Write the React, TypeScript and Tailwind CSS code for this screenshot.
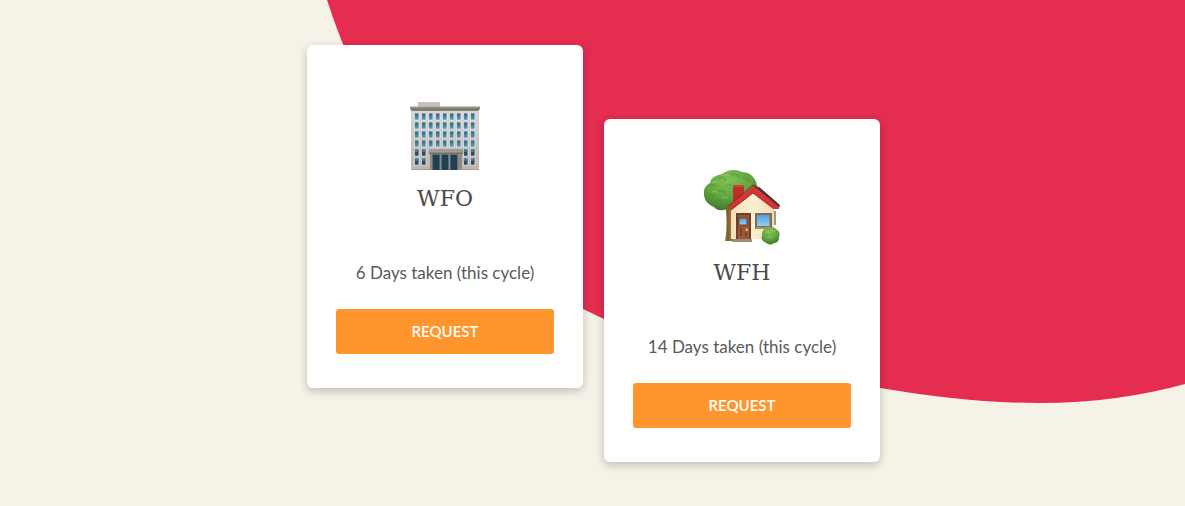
import type { ReactNode } from 'react';

const WINDOW_COLUMNS = [0, 1, 2, 3, 4, 5, 6, 7, 8];
const WINDOW_ROWS = [0, 1, 2, 3, 4, 5];

function OfficeIcon() {
  return (
    <svg viewBox="0 0 80 80" className="h-20 w-20" aria-hidden="true">
      <defs>
        <linearGradient id="office-wall" x1="0" y1="0" x2="0" y2="1">
          <stop offset="0" stopColor="#dad8d4" />
          <stop offset="1" stopColor="#bdb5b0" />
        </linearGradient>
        <linearGradient id="office-glass" x1="0" y1="0" x2="0" y2="1">
          <stop offset="0" stopColor="#356078" />
          <stop offset="1" stopColor="#5f9dba" />
        </linearGradient>
        <linearGradient id="office-cornice" x1="0" y1="0" x2="0" y2="1">
          <stop offset="0" stopColor="#a39d96" />
          <stop offset="1" stopColor="#68615d" />
        </linearGradient>
      </defs>
      <rect x="13" y="9" width="22" height="5" fill="#c5c4bc" />
      <rect x="6" y="16" width="68" height="61" fill="url(#office-wall)" />
      <path d="M5 13.5h70v2l-1.5 2.3h-67L5 15.5z" fill="url(#office-cornice)" />
      {WINDOW_ROWS.map((row) =>
        WINDOW_COLUMNS.filter((col) => row < 4 || col < 2 || col > 6).map((col) => (
          <g key={`${row}-${col}`}>
            <rect x={9 + col * 7} y={20 + row * 9} width="5.4" height="7.4" fill="#e9edef" />
            <rect
              x={9.8 + col * 7}
              y={20.4 + row * 9}
              width="3.8"
              height="6.4"
              fill={row > 3 ? '#304c5b' : 'url(#office-glass)'}
            />
            {row > 3 && <rect x={9.8 + col * 7} y={20.4 + row * 9} width="3.8" height="2.4" fill="#4b7e98" />}
          </g>
        )),
      )}
      <rect x="25" y="59" width="32" height="18" fill="#8f8983" />
      <rect x="24" y="56" width="34" height="4.6" fill="#a29b94" />
      <rect x="24" y="59.6" width="34" height="1.2" fill="#70685f" />
      <rect x="27" y="61" width="26" height="16" fill="#7d8e94" />
      <rect x="27.6" y="61.6" width="7" height="15.4" fill="#213f50" />
      <rect x="36.6" y="61.6" width="6.8" height="15.4" fill="#213f50" />
      <rect x="45.4" y="61.6" width="7" height="15.4" fill="#213f50" />
      <path d="M6 76.5h21M53 76.5h21" stroke="#a69b95" strokeWidth="1" />
    </svg>
  );
}

function HouseIcon() {
  return (
    <svg viewBox="0 0 80 80" className="h-20 w-20" aria-hidden="true">
      <defs>
        <radialGradient id="tree-leaves" cx="0.45" cy="0.25" r="0.75">
          <stop offset="0" stopColor="#80c258" />
          <stop offset="0.6" stopColor="#5fa43d" />
          <stop offset="1" stopColor="#3f7a2b" />
        </radialGradient>
        <linearGradient id="house-wall" x1="0" y1="0" x2="1" y2="0">
          <stop offset="0" stopColor="#f3dfb6" />
          <stop offset="0.5" stopColor="#fdf0d0" />
          <stop offset="1" stopColor="#eeddb5" />
        </linearGradient>
        <linearGradient id="house-pane" x1="0" y1="0" x2="0" y2="1">
          <stop offset="0" stopColor="#529fde" />
          <stop offset="1" stopColor="#96cef5" />
        </linearGradient>
      </defs>
      <path d="M23 36h8v38h-8c2-10 2-25 0-38z" fill="#91713c" />
      <path d="M26 40v34" stroke="#6b522b" strokeWidth="1" />
      <path
        d="M12 40C6 38 1 32 2 25c0-5 3-7 6-9 1-6 7-8 12-9 6-5 15-5 20-2 7 0 11 4 13 8 3 4 2 9 0 13 0 6-6 10-11 10-5 6-11 7-17 6-5 2-10 2-13-2z"
        fill="url(#tree-leaves)"
      />
      <path
        d="M7 19c3-3 6-1 7 1M16 12c4-3 7-1 8 2M28 8c4-2 8 0 9 3M5 28c3-2 6 0 7 3M16 25c3-3 7-1 8 2M14 34c3-2 6 0 7 2M24 19c2-2 4-2 6 0M40 11c4-1 7 1 8 4"
        fill="none"
        stroke="#468330"
        strokeWidth="1.4"
        opacity="0.4"
      />
      <path d="M9 16c3-2 5-2 7 0M21 9c3-2 5-2 7 0M10 25c2-1 4-1 6 1M20 31c2-1 4-1 6 0" fill="none" stroke="#98d36e" strokeWidth="1.2" opacity="0.6" />
      <path d="M31 18h11v11l-11 9z" fill="#bc302a" />
      <path d="M31 18h11v2H31z" fill="#d5443a" />
      <path d="M73 44v14" stroke="#8c7b68" strokeWidth="1.6" />
      <path d="M29 40l22-18 21 20v30H29z" fill="url(#house-wall)" />
      <path d="M51 19L58 21 78 38l-1 3z" fill="#55332f" />
      <path d="M51 19L25 41l4 2 22-17 21 16h5v-2z" fill="#d93434" />
      <path d="M29 43l22-17 21 16" fill="none" stroke="#a52529" strokeWidth="1" />
      <path d="M25 40l26-22 7 3 19 17" fill="none" stroke="#713131" strokeWidth="1" />
      <rect x="34" y="46" width="15" height="26" fill="#70402b" />
      <rect x="36" y="48" width="11" height="24" fill="#9a5637" />
      <rect x="37" y="51" width="8" height="7" fill="url(#house-pane)" stroke="#633522" strokeWidth="0.8" />
      <path d="M38 61h2v8h-2zM43 65h2v4h-2z" fill="#7f422c" />
      <circle cx="44.8" cy="62.7" r="1.2" fill="#f5d16b" />
      <path d="M31 72h19v3H30z" fill="#9b8c7b" />
      <rect x="53" y="46" width="17" height="16" fill="#806c52" />
      <rect x="55" y="48" width="12.5" height="11" fill="url(#house-pane)" />
      <path d="M54 61h15" stroke="#c2a780" strokeWidth="1.2" />
      <path
        d="M61 64c1-3 4-4 6-3 4-2 7 0 8 2 3 1 3 5 2 7 0 4-2 6-5 6-3 3-7 1-9-1-3-1-4-4-3-6 0-2 0-4 1-5z"
        fill="url(#tree-leaves)"
      />
      <path d="M63 66c2-2 4-1 5 0M70 64c2-1 4 0 4 2M65 71c2-2 4-1 5 1" fill="none" stroke="#a1d776" strokeWidth="0.9" opacity="0.7" />
    </svg>
  );
}

interface LeaveCardProps {
  title: string;
  days: number;
  icon: ReactNode;
}

function LeaveCard({ title, days, icon }: LeaveCardProps) {
  return (
    <section className="flex w-full max-w-[276px] flex-col items-center rounded-md bg-white px-[29px] pt-12 pb-[34px] shadow-[0_3px_10px_rgba(0,0,0,0.22)]">
      {icon}
      <h2 className="font-['DejaVu_Serif',serif] text-[22px] leading-[52px] text-[#4a4a4a]">{title}</h2>
      <p className="mt-9 text-[17px] leading-6 whitespace-nowrap text-[#5a5a5a]">{days} Days taken (this cycle)</p>
      <button type="button" className="mt-6 h-[45px] w-full rounded-[3px] bg-[#ff962d] text-[15px] font-semibold text-white">
        REQUEST
      </button>
    </section>
  );
}

export default function App() {
  return (
    <div className="relative min-h-screen overflow-hidden bg-[#f5f2e7] font-[Lato,sans-serif]">
      {/* Background blob */}
      <svg
        viewBox="0 0 1185 506"
        preserveAspectRatio="xMidYMin slice"
        className="absolute inset-0 h-full w-full"
        aria-hidden="true"
      >
        <path
          d="M327 0C375 150 465 245 583 309C670 353 770 373 880 388C935 397 985 403 1040 403C1092 403 1142 396 1185 384V0z"
          fill="#e52d50"
        />
      </svg>

      {/* Cards */}
      <main className="relative flex items-start justify-center gap-[21px] pt-[45px] pb-11 pl-0.5">
        <LeaveCard title="WFO" days={6} icon={<OfficeIcon />} />
        <div className="w-full max-w-[276px] pt-[74px]">
          <LeaveCard title="WFH" days={14} icon={<HouseIcon />} />
        </div>
      </main>
    </div>
  );
}
